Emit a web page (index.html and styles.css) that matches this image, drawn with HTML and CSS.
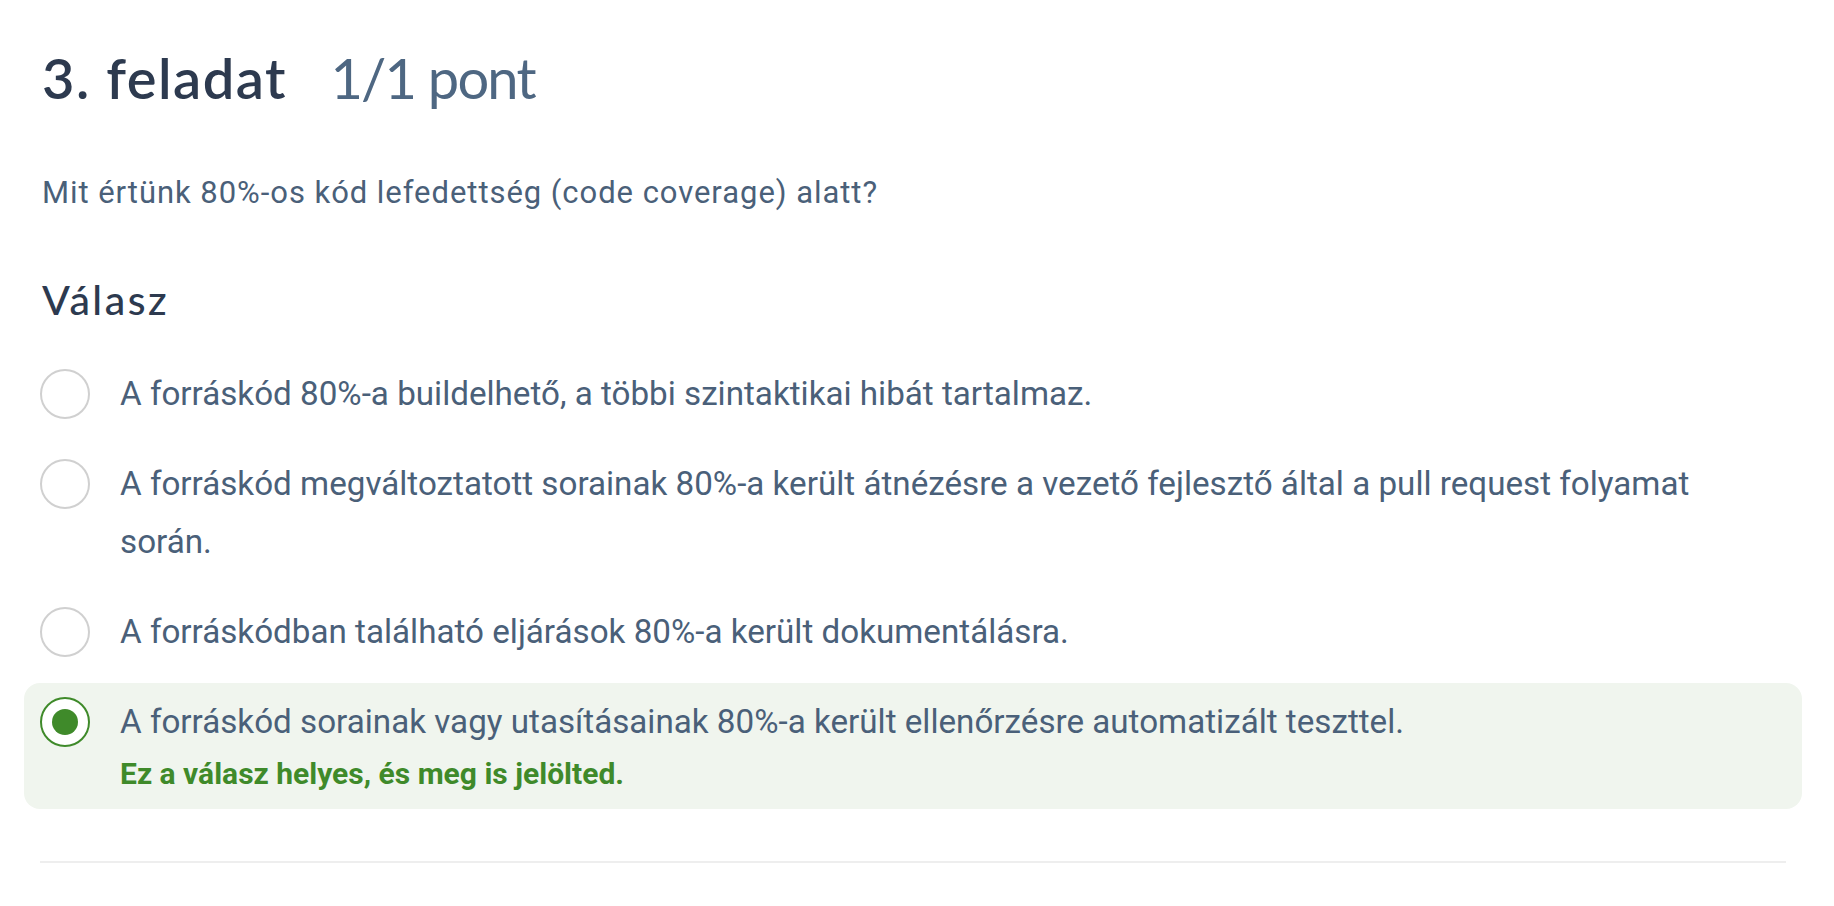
FILE: index.html
```html
<!DOCTYPE html>
<html lang="hu">
<head>
<meta charset="utf-8">
<title>3. feladat</title>
<link rel="stylesheet" href="styles.css">
</head>
<body>
<main class="task">
  <h1 class="task-title">3. feladat <span class="task-score">1/1 pont</span></h1>
  <p class="question">Mit értünk 80%-os kód lefedettség (code coverage) alatt?</p>
  <h2 class="answer-title">Válasz</h2>
  <ul class="options">
    <li class="option">
      <span class="radio"></span>
      <div class="option-body"><div class="option-text">A forráskód 80%-a buildelhető, a többi szintaktikai hibát tartalmaz.</div></div>
    </li>
    <li class="option">
      <span class="radio"></span>
      <div class="option-body"><div class="option-text">A forráskód megváltoztatott sorainak 80%-a került átnézésre a vezető fejlesztő által a pull request folyamat során.</div></div>
    </li>
    <li class="option">
      <span class="radio"></span>
      <div class="option-body"><div class="option-text">A forráskódban található eljárások 80%-a került dokumentálásra.</div></div>
    </li>
    <li class="option option-correct">
      <span class="radio radio-checked"></span>
      <div class="option-body">
        <div class="option-text">A forráskód sorainak vagy utasításainak 80%-a került ellenőrzésre automatizált teszttel.</div>
        <div class="feedback">Ez a válasz helyes, és meg is jelölted.</div>
      </div>
    </li>
  </ul>
  <hr class="divider">
</main>
</body>
</html>
```

FILE: styles.css
```css
html, body {
  margin: 0;
  padding: 0;
  background: #ffffff;
}

body {
  font-family: Roboto, "Liberation Sans", Arial, sans-serif;
  color: #4a6079;
}

.task {
  width: 1746px;
  padding: 44px 0 0 40px;
}

.task-title {
  margin: 0;
  font-family: Lato, "Noto Sans", sans-serif;
  font-size: 56px;
  line-height: 1.2;
  font-weight: 600;
  letter-spacing: 1.5px;
  color: #2d3a4f;
  padding-left: 2px;
}

.task-score {
  font-weight: 400;
  letter-spacing: -1.8px;
  color: #4e6782;
  margin-left: 28px;
}

.question {
  margin: 59px 0 0 0;
  padding-left: 2px;
  font-size: 31px;
  letter-spacing: 0.95px;
  line-height: 45px;
}

.answer-title {
  margin: 60px 0 0 0;
  padding-left: 2px;
  font-family: Lato, "Noto Sans", sans-serif;
  font-size: 41px;
  letter-spacing: 2.5px;
  line-height: 50px;
  font-weight: 500;
  color: #2d3a4f;
}

.options {
  list-style: none;
  margin: 30px -16px 0 -16px;
  padding: 0;
  display: flex;
  flex-direction: column;
  gap: 12px;
}

.option {
  display: flex;
  align-items: flex-start;
  gap: 30px;
  padding: 10px 16px;
  border-radius: 16px;
}

.option-correct {
  background: #f0f5ee;
  padding-bottom: 12px;
}

.radio {
  flex: none;
  box-sizing: border-box;
  width: 50px;
  height: 50px;
  margin-top: 4px;
  border: 2px solid #d0d0d0;
  border-radius: 50%;
  background: #ffffff;
  display: flex;
  align-items: center;
  justify-content: center;
}

.radio-checked {
  border-color: #3f8a2a;
}

.radio-checked::after {
  content: "";
  width: 26px;
  height: 26px;
  border-radius: 50%;
  background: #3f8a2a;
}

.option-body {
  flex: 1;
  padding-right: 60px;
}

.option-text {
  font-size: 33.2px;
  line-height: 58px;
}

.feedback {
  font-size: 30px;
  line-height: 46px;
  font-weight: 700;
  color: #3f8a2a;
}

.divider {
  margin: 52px 0 0 0;
  border: 0;
  height: 2px;
  background: #eeeeee;
}
```
